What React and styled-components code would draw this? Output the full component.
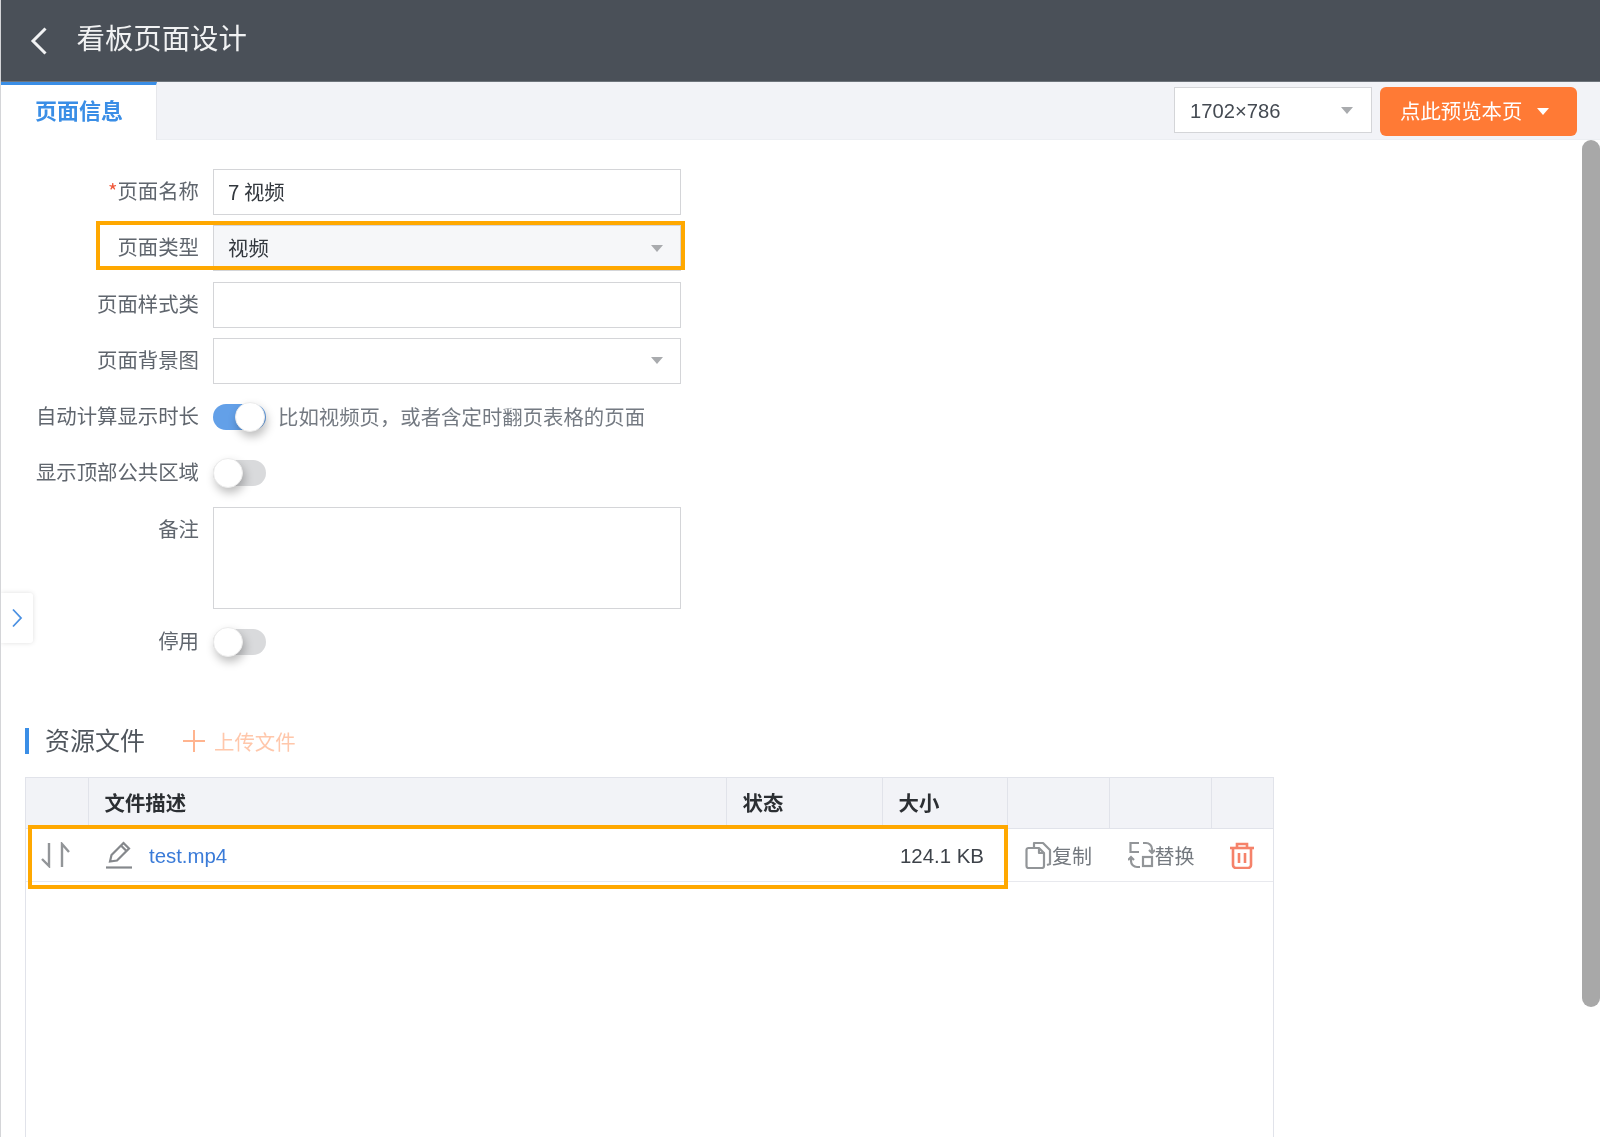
import React from 'react';
import styled, { createGlobalStyle } from 'styled-components';

const Global = createGlobalStyle`
  html, body { margin: 0; padding: 0; background: #fff; }
  body { font-family: "Noto Sans CJK SC", "Liberation Sans", sans-serif; }
  * { box-sizing: border-box; }
`;

const Page = styled.div`
  position: relative;
  width: 1600px;
  height: 1137px;
  overflow: hidden;
  display: flex;
  flex-direction: column;
  background: #fff;
  border-left: 1.5px solid #d4d5d8;
  filter: blur(0.45px);
`;
const Header = styled.header`
  height: 82px;
  margin-left: -1.5px;
  flex: none;
  display: flex;
  align-items: center;
  gap: 29px;
  padding-left: 30px;
  background: #4a5058;
  color: #f1f2f3;
  font-size: 28.4px;
  border-bottom: 1px solid #6e747b;
`;
const Title = styled.h1`
  margin: 0;
  font: inherit;
  position: relative;
  top: -4px;
`;
const TabBar = styled.div`
  height: 58px;
  flex: none;
  display: flex;
  justify-content: space-between;
  background: #f2f3f7;
  padding-right: 23px;
  border-bottom: 1px solid #eceef2;
`;
const Tab = styled.div`
  width: 156px;
  border-top: 3px solid #3a8ee6;
  border-right: 1px solid #e6e7eb;
  background: #fff;
  color: #3a8ee6;
  font-size: 22px;
  font-weight: 700;
  padding: 8px 0 0 34px;
  margin-bottom: -1px;
`;
const TabTools = styled.div`
  display: flex;
  gap: 8px;
  padding-top: 5px;
`;
const SizeSelect = styled.div`
  width: 198px;
  height: 46px;
  background: #fff;
  border: 1.5px solid #d4d5d8;
  display: flex;
  align-items: center;
  justify-content: space-between;
  padding: 0 18px 0 15px;
  color: #444a52;
  font-family: "Liberation Sans", sans-serif;
  font-size: 20.2px;
`;
const SizeValue = styled.span`
  padding-top: 2px;
`;
const Caret = styled.i`
  display: block;
  width: 0;
  height: 0;
  border-left: 6.5px solid transparent;
  border-right: 6.5px solid transparent;
  border-top: 7px solid ${p => p.$color || '#a9abae'};
`;
const PreviewButton = styled.button`
  width: 197px;
  height: 49px;
  border: 0;
  border-radius: 6px;
  background: #ff7a35;
  color: #fff;
  font: inherit;
  font-size: 20.4px;
  display: flex;
  align-items: center;
  gap: 15px;
  padding: 0 0 0 20px;
`;
const PreviewLabel = styled.span`
  padding-bottom: 4px;
`;
const Body = styled.main`
  flex: 1;
  min-height: 0;
  display: flex;
  flex-direction: column;
  padding-top: 29px;
`;
const Form = styled.div`
  display: flex;
  flex-direction: column;
  gap: 10.3px;
`;
const Row = styled.div`
  position: relative;
  display: flex;
  align-items: flex-start;
  gap: 14px;
  min-height: 46px;
`;
const Label = styled.label`
  width: 198px;
  flex: none;
  height: 46px;
  line-height: 43px;
  text-align: right;
  font-size: 20.4px;
  color: #60666e;
  white-space: nowrap;
`;
const Star = styled.span`
  color: #f05a3c;
`;
const Field = styled.div`
  width: 468px;
  height: ${p => p.$height || 46}px;
  display: flex;
  align-items: center;
  justify-content: space-between;
  padding: 0 17px 0 14px;
  background: ${p => (p.$disabled ? '#f6f7f9' : '#fff')};
  border: 1.5px solid #d4d5d8;
  color: #33383e;
  font-size: 20.4px;
`;
const FieldValue = styled.span`
  padding-bottom: 3px;
`;
const Highlight = styled.div`
  position: absolute;
  left: ${p => p.$left}px;
  top: ${p => p.$top}px;
  width: ${p => p.$width}px;
  height: ${p => p.$height}px;
  border: 4px solid #ffa800;
  pointer-events: none;
`;
const SwitchRow = styled(Row)`
  align-items: center;
  min-height: 46px;
`;
const Toggle = styled.span`
  position: relative;
  flex: none;
  display: block;
  width: 53px;
  height: 26px;
  border-radius: 13px;
  background: ${p => (p.$on ? '#63a0e8' : '#d9dadc')};
`;
const Knob = styled.span`
  position: absolute;
  top: -2px;
  ${p => (p.$on ? 'right: 1px;' : 'left: 0;')}
  width: 30px;
  height: 30px;
  border-radius: 50%;
  background: #fff;
  border: 1px solid #ececec;
  box-shadow: 2px 5px 10px rgba(0, 0, 0, .26);
`;
const Hint = styled.span`
  font-size: 20.4px;
  color: #747a82;
  white-space: nowrap;
  margin-left: -2px;
  padding-bottom: 3px;
`;
const SectionHead = styled.div`
  display: flex;
  align-items: center;
  height: 26px;
  margin: 63px 0 23px 23.5px;
`;
const SectionBar = styled.i`
  width: 4.5px;
  height: 26px;
  background: #3a8ee6;
`;
const SectionTitle = styled.h2`
  margin: 0 0 0 16px;
  padding-bottom: 4px;
  font-weight: 400;
  font-size: 25px;
  color: #50565d;
`;
const Upload = styled.span`
  display: flex;
  align-items: center;
  gap: 8px;
  margin-left: 37px;
  color: #ffc7ab;
  font-size: 20.4px;
`;
const Table = styled.div`
  position: relative;
  flex: 1;
  margin-left: 24px;
  width: 1249px;
  border: 1.5px solid #e1e3ea;
  border-bottom: 0;
`;
const columns = '63px 638px 156px 125px 101.5px 102px 1fr';
const HeadRow = styled.div`
  display: grid;
  grid-template-columns: ${columns};
  height: 51px;
  background: #f2f3f7;
  border-bottom: 1.5px solid #e1e3ea;
`;
const HeadCell = styled.div`
  display: flex;
  align-items: center;
  padding-left: 15.5px;
  padding-bottom: 3px;
  font-size: 20.4px;
  font-weight: 700;
  color: #2c2f33;
  border-right: ${p => (p.$last ? '0' : '1.5px solid #e1e3ea')};
`;
const BodyRow = styled.div`
  display: grid;
  grid-template-columns: ${columns};
  height: 53px;
  border-bottom: 1.5px solid #e8e9ee;
`;
const Cell = styled.div`
  display: flex;
  align-items: center;
  gap: ${p => p.$gap || 0}px;
  padding-left: ${p => p.$pad || 0}px;
  font-family: "Liberation Sans", "Noto Sans CJK SC", sans-serif;
  font-size: 20.4px;
  color: #3d4249;
`;
const CellValue = styled.span`
  padding-top: 2px;
`;
const FileLink = styled.a`
  color: #3a7bd8;
  font-family: "Liberation Sans", sans-serif;
  padding-top: 2px;
`;
const ActionText = styled.span`
  font-family: "Noto Sans CJK SC", sans-serif;
  color: #74797f;
  font-size: 20px;
`;
const SideTab = styled.div`
  position: absolute;
  left: 0;
  top: 593px;
  width: 32px;
  height: 50px;
  background: #fff;
  border-radius: 0 3px 3px 0;
  box-shadow: 0 0 5px rgba(0, 0, 0, .13);
  display: flex;
  align-items: center;
  justify-content: center;
`;
const Scrollbar = styled.div`
  position: absolute;
  right: 0;
  top: 140px;
  width: 18px;
  height: 867px;
  background: #a8a8a8;
  border-radius: 9px;
`;

const Back = () => (
  <svg width="18" height="28" viewBox="0 0 18 28" fill="none" stroke="#f1f2f3" strokeWidth="3">
    <path d="M15.5 1.5 3 14l12.5 12.5" />
  </svg>
);
const Chevron = () => (
  <svg width="12" height="20" viewBox="0 0 12 20" fill="none" stroke="#4a90e2" strokeWidth="1.8">
    <path d="M2 1.5 10 10l-8 8.5" />
  </svg>
);
const Plus = () => (
  <svg width="24" height="24" viewBox="0 0 24 24" stroke="#ffb48f" strokeWidth="2">
    <path d="M1 12h22M12 1v22" />
  </svg>
);
const Sort = () => (
  <svg width="30" height="26" viewBox="0 0 30 26" fill="none" stroke="#929598" strokeWidth="2.4">
    <path d="M1 17l7 7V1" />
    <path d="M21 25V2l7 8" />
  </svg>
);
const Pencil = () => (
  <svg width="28" height="28" viewBox="0 0 28 28" fill="none" stroke="#85888c" strokeWidth="2.2">
    <path d="M5 20.5 6.5 14 18.5 2l5.5 5.5L12 19.5z" />
    <path d="M16 4.5 21.5 10" />
    <path d="M1 26.5h26" strokeWidth="2.2" />
  </svg>
);
const Copy = () => (
  <svg width="27" height="28" viewBox="0 0 27 28" fill="none" stroke="#929598" strokeWidth="2.2" strokeLinejoin="round">
    <path d="M9 6V2h9l7 7v14l-3 1" />
    <path d="M3.5 7H14l5 5v13a2 2 0 0 1-2 2H3.5a2 2 0 0 1-2-2V9a2 2 0 0 1 2-2z" />
    <path d="M14 7v5h5" />
  </svg>
);
const Replace = () => (
  <svg width="27" height="28" viewBox="0 0 27 28" fill="none" stroke="#929598" strokeWidth="2.2">
    <path d="M11 2H2.5v9H11" />
    <rect x="15" y="16" width="9" height="9" />
    <path d="M15 2h3a6 6 0 0 1 6 6v4" />
    <path d="M21 9l3 3 3-3" />
    <path d="M12 26H9a6 6 0 0 1-6-6v-4" />
    <path d="M0 19l3-3 3 3" />
  </svg>
);
const Trash = () => (
  <svg width="24" height="27" viewBox="0 0 24 27" fill="none" stroke="#f5826a" strokeWidth="2.6">
    <path d="M0 6h24" />
    <path d="M7 6V2h10v4" />
    <path d="M3 6v17a3 3 0 0 0 3 3h12a3 3 0 0 0 3-3V6" />
    <path d="M9 11v10M15 11v10" />
  </svg>
);

export default function App() {
  return (
    <>
      <Global />
      <Page>
        <Header>
          <Back />
          <Title>看板页面设计</Title>
        </Header>
        <TabBar>
          <Tab>页面信息</Tab>
          <TabTools>
            <SizeSelect><SizeValue>1702×786</SizeValue><Caret /></SizeSelect>
            <PreviewButton><PreviewLabel>点此预览本页</PreviewLabel><Caret $color="#fff" /></PreviewButton>
          </TabTools>
        </TabBar>
        <Body>
          <Form>
            <Row>
              <Label><Star>*</Star>页面名称</Label>
              <Field><FieldValue>7 视频</FieldValue></Field>
            </Row>
            <Row>
              <Label>页面类型</Label>
              <Field $disabled><FieldValue>视频</FieldValue><Caret /></Field>
              <Highlight $left={95} $top={-4} $width={589} $height={49} />
            </Row>
            <Row>
              <Label>页面样式类</Label>
              <Field />
            </Row>
            <Row>
              <Label>页面背景图</Label>
              <Field><span /><Caret /></Field>
            </Row>
            <SwitchRow>
              <Label>自动计算显示时长</Label>
              <Toggle $on><Knob $on /></Toggle>
              <Hint>比如视频页，或者含定时翻页表格的页面</Hint>
            </SwitchRow>
            <SwitchRow>
              <Label>显示顶部公共区域</Label>
              <Toggle><Knob /></Toggle>
            </SwitchRow>
            <Row>
              <Label>备注</Label>
              <Field $height={102} />
            </Row>
            <SwitchRow>
              <Label>停用</Label>
              <Toggle><Knob /></Toggle>
            </SwitchRow>
          </Form>
          <SectionHead>
            <SectionBar />
            <SectionTitle>资源文件</SectionTitle>
            <Upload><Plus />上传文件</Upload>
          </SectionHead>
          <Table>
            <HeadRow>
              <HeadCell />
              <HeadCell>文件描述</HeadCell>
              <HeadCell>状态</HeadCell>
              <HeadCell>大小</HeadCell>
              <HeadCell />
              <HeadCell />
              <HeadCell $last />
            </HeadRow>
            <BodyRow>
              <Cell $pad={15}><Sort /></Cell>
              <Cell $pad={16} $gap={16}><Pencil /><FileLink>test.mp4</FileLink></Cell>
              <Cell />
              <Cell $pad={17}><CellValue>124.1 KB</CellValue></Cell>
              <Cell $pad={17}><Copy /><ActionText>复制</ActionText></Cell>
              <Cell $pad={18}><Replace /><ActionText>替换</ActionText></Cell>
              <Cell $pad={18}><Trash /></Cell>
            </BodyRow>
            <Highlight $left={2} $top={47} $width={980} $height={64} />
          </Table>
        </Body>
        <SideTab><Chevron /></SideTab>
        <Scrollbar />
      </Page>
    </>
  );
}
